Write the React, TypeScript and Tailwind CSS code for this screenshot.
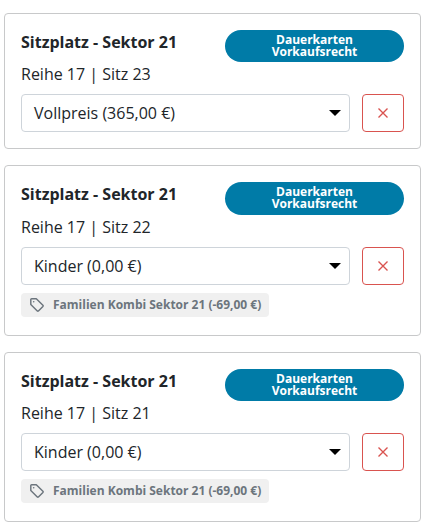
type Ticket = {
  id: string;
  title: string;
  seat: string;
  price: string;
  discount?: string;
};

const tickets: Ticket[] = [
  {
    id: "seat-23",
    title: "Sitzplatz - Sektor 21",
    seat: "Reihe 17 | Sitz 23",
    price: "Vollpreis (365,00 €)",
  },
  {
    id: "seat-22",
    title: "Sitzplatz - Sektor 21",
    seat: "Reihe 17 | Sitz 22",
    price: "Kinder (0,00 €)",
    discount: "Familien Kombi Sektor 21 (-69,00 €)",
  },
  {
    id: "seat-21",
    title: "Sitzplatz - Sektor 21",
    seat: "Reihe 17 | Sitz 21",
    price: "Kinder (0,00 €)",
    discount: "Familien Kombi Sektor 21 (-69,00 €)",
  },
];

function TagIcon() {
  return (
    <svg
      viewBox="0 0 14 14"
      className="h-[14px] w-[14px] shrink-0"
      fill="none"
      stroke="currentColor"
      strokeWidth="1.45"
      strokeLinejoin="round"
    >
      <path d="M.8 1.6a.8.8 0 0 1 .8-.8h4.7l6.6 6.5a.8.8 0 0 1 0 1.1l-4.5 4.5a.8.8 0 0 1-1.1 0L.8 6.4z" />
      <circle cx="3.7" cy="3.7" r=".8" fill="currentColor" stroke="none" />
    </svg>
  );
}

function TicketCard({ ticket }: { ticket: Ticket }) {
  return (
    <div className="rounded-[4px] border border-[#c8c9ca] bg-white p-4">
      <div className="flex h-[32.4px] items-start justify-between">
        <div className="font-bold">{ticket.title}</div>
        <div className="h-full w-[179px] rounded-full bg-[#007ba7] px-8 py-1 text-center text-[12px] leading-[12px] font-bold text-white">
          Dauerkarten Vorkaufsrecht
        </div>
      </div>
      <div>{ticket.seat}</div>

      <div className="mt-2 flex gap-3">
        <button
          type="button"
          className="flex h-[38px] flex-1 items-center justify-between rounded-[4px] border border-[#ced4da] pr-2 pl-3"
        >
          <span>{ticket.price}</span>
          <svg viewBox="0 0 12 6" className="h-[6px] w-[12px]">
            <path d="M0 0h12L6 6z" fill="#000" />
          </svg>
        </button>
        <button
          type="button"
          aria-label="Entfernen"
          className="flex h-[38px] w-[42px] items-center justify-center rounded-[4px] border border-[#d9534f] text-[#d9534f]"
        >
          <svg
            viewBox="0 0 10 10"
            className="h-[10px] w-[10px]"
            stroke="currentColor"
            strokeWidth="1.35"
          >
            <path d="M.5.5l9 9M9.5.5l-9 9" />
          </svg>
        </button>
      </div>

      {ticket.discount && (
        <div className="mt-2 h-[26px]">
          <div className="inline-flex h-6 w-[248px] items-center rounded-[4px] bg-[#f0f0f0] pl-[9px] text-[12px] font-bold whitespace-nowrap text-[#6c757d]">
            <TagIcon />
            <span className="ml-[9px]">{ticket.discount}</span>
          </div>
        </div>
      )}
    </div>
  );
}

export default function App() {
  return (
    <div className="min-h-screen bg-white pt-[12.8px] pr-3 pl-1 font-['Open_Sans','Noto_Sans',sans-serif] text-[16px] leading-6 text-[#212529]">
      <div className="flex flex-col gap-4">
        {tickets.map((ticket) => (
          <TicketCard key={ticket.id} ticket={ticket} />
        ))}
      </div>
    </div>
  );
}
